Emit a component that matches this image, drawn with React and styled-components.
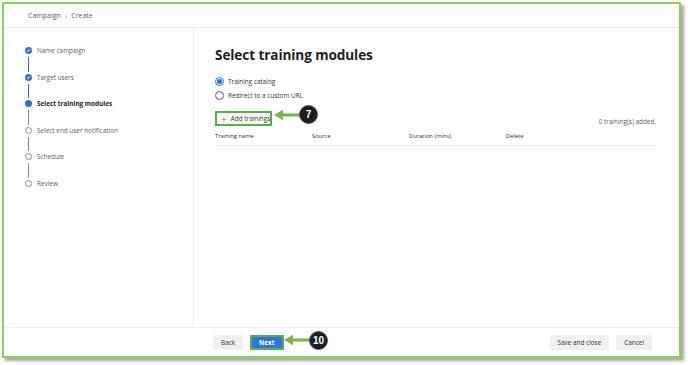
import React from 'react'
import styled, { createGlobalStyle } from 'styled-components'

const GlobalStyle = createGlobalStyle`
  html, body {
    margin: 0;
    padding: 0;
    background: #ffffff;
  }
  body {
    font-family: "Open Sans", "Noto Sans", sans-serif;
    color: #323130;
  }
`

const steps = [
  { label: 'Name campaign', state: 'done' },
  { label: 'Target users', state: 'done' },
  { label: 'Select training modules', state: 'current' },
  { label: 'Select end user notification', state: 'todo' },
  { label: 'Schedule', state: 'todo' },
  { label: 'Review', state: 'todo' },
]

const Check = () => (
  <svg width="5" height="5" viewBox="0 0 10 10">
    <path d="M2 5.2 L4.2 7.3 L8 2.8" fill="none" stroke="#fff" strokeWidth="1.8" strokeLinecap="round" strokeLinejoin="round" />
  </svg>
)

const Callout = ({ number, left, top }) => (
  <CalloutWrap style={{ left, top }}>
    <svg width="28" height="12" viewBox="0 0 28 12">
      <path d="M27 6 H9" stroke="#7ab648" strokeWidth="3.2" />
      <path d="M1 6 L10 0.8 L10 11.2 Z" fill="#7ab648" />
    </svg>
    <Badge>{number}</Badge>
  </CalloutWrap>
)

export default function App() {
  return (
    <Page>
      <GlobalStyle />
      <Frame>
        <Header>
          <Crumb>Campaign</Crumb>
          <Chevron>›</Chevron>
          <Crumb>Create</Crumb>
        </Header>
        <Body>
          <Nav>
            {steps.map((s, i) => (
              <Step key={s.label}>
                <Marker>
                  <Dot state={s.state}>{s.state === 'done' && <Check />}</Dot>
                  {i < steps.length - 1 && <Rail active={s.state === 'done'} />}
                </Marker>
                <StepLabel current={s.state === 'current'}>{s.label}</StepLabel>
              </Step>
            ))}
          </Nav>
          <Main>
            <Title>Select training modules</Title>
            <Radios>
              <RadioRow>
                <Radio checked />
                Training catalog
              </RadioRow>
              <RadioRow>
                <Radio />
                Redirect to a custom URL
              </RadioRow>
            </Radios>
            <ToolRow>
              <AddButton>
                <Plus>+</Plus>
                Add trainings
                <Callout number="7" left="56px" top="-8px" />
              </AddButton>
              <Count>0 training(s) added.</Count>
            </ToolRow>
            <TableHead>
              <Col>Training name</Col>
              <Col>Source</Col>
              <Col>Duration (mins)</Col>
              <Col>Delete</Col>
            </TableHead>
          </Main>
        </Body>
        <Footer>
          <Group>
            <Button>Back</Button>
            <Button primary>
              Next
              <Callout number="10" left="31px" top="-6px" />
            </Button>
          </Group>
          <Group>
            <Button>Save and close</Button>
            <Button>Cancel</Button>
          </Group>
        </Footer>
      </Frame>
    </Page>
  )
}

const Page = styled.div`
  width: 688px;
  height: 365px;
  padding: 2px 0 0 2px;
  box-sizing: border-box;
`

const Frame = styled.div`
  width: 679px;
  height: 356px;
  box-sizing: border-box;
  border: 2px solid #8ccf5a;
  background: #fff;
  box-shadow: 3px 3px 3px rgba(0, 0, 0, 0.35);
  display: flex;
  flex-direction: column;
`

const Header = styled.div`
  height: 23px;
  flex: none;
  display: flex;
  align-items: center;
  gap: 4px;
  padding-left: 24px;
  border-bottom: 1px solid #efefef;
  font-size: 7px;
  color: #605e5c;
`

const Crumb = styled.span``

const Chevron = styled.span`
  font-size: 8px;
  color: #8a8886;
  margin-top: -1px;
`

const Body = styled.div`
  flex: 1;
  display: flex;
  min-height: 0;
`

const Nav = styled.div`
  width: 190px;
  flex: none;
  border-right: 1px solid #efefef;
  padding: 19px 0 0 19px;
  box-sizing: border-box;
`

const Step = styled.div`
  display: flex;
  height: 26.6px;
`

const Marker = styled.div`
  width: 11px;
  display: flex;
  flex-direction: column;
  align-items: center;
`

const Dot = styled.div`
  width: 7px;
  height: 7px;
  border-radius: 50%;
  box-sizing: border-box;
  flex: none;
  display: flex;
  align-items: center;
  justify-content: center;
  background: ${p => (p.state === 'todo' ? '#fff' : '#2f6fd8')};
  border: ${p => (p.state === 'todo' ? '1px solid #8a8886' : 'none')};
`

const Rail = styled.div`
  width: 1px;
  flex: 1;
  margin: 3px 0 2px;
  background: ${p => (p.active ? '#2f6fd8' : '#8a8886')};
`

const StepLabel = styled.div`
  margin-left: 3px;
  font-size: 6.4px;
  line-height: 7px;
  color: ${p => (p.current ? '#201f1e' : '#605e5c')};
  font-weight: ${p => (p.current ? 700 : 400)};
`

const Main = styled.div`
  flex: 1;
  padding: 18px 23px 0 21px;
`

const Title = styled.div`
  font-size: 13.6px;
  font-weight: 700;
  letter-spacing: -0.1px;
  color: #201f1e;
  line-height: 18px;
`

const Radios = styled.div`
  margin-top: 12px;
  display: flex;
  flex-direction: column;
  gap: 4px;
`

const RadioRow = styled.div`
  display: flex;
  align-items: center;
  gap: 4px;
  font-size: 6.4px;
  color: #323130;
  height: 10px;
`

const Radio = styled.span`
  width: 9px;
  height: 9px;
  box-sizing: border-box;
  border-radius: 50%;
  border: 1px solid ${p => (p.checked ? '#2f6fd8' : '#605e5c')};
  display: flex;
  align-items: center;
  justify-content: center;
  &::after {
    content: '';
    width: 5px;
    height: 5px;
    border-radius: 50%;
    background: ${p => (p.checked ? '#2f6fd8' : 'transparent')};
  }
`

const ToolRow = styled.div`
  margin-top: 11px;
  display: flex;
  justify-content: space-between;
  align-items: flex-end;
`

const AddButton = styled.div`
  position: relative;
  width: 57px;
  height: 15px;
  box-sizing: border-box;
  border: 2px solid #58b04a;
  display: flex;
  align-items: center;
  gap: 4px;
  padding-left: 4px;
  font-size: 6.4px;
  white-space: nowrap;
  color: #323130;
`

const Plus = styled.span`
  font-size: 10px;
  font-weight: 300;
  color: #605e5c;
  line-height: 10px;
`

const Count = styled.div`
  font-size: 6.4px;
  color: #605e5c;
`

const TableHead = styled.div`
  margin-top: 6px;
  display: grid;
  grid-template-columns: 97px 97px 97px 1fr;
  padding-bottom: 5px;
  border-bottom: 1px solid #efefef;
  font-size: 5.8px;
  color: #323130;
`

const Col = styled.div``

const Footer = styled.div`
  height: 28px;
  flex: none;
  border-top: 1px solid #efefef;
  display: flex;
  align-items: center;
  justify-content: space-between;
  padding: 0 27px 0 209px;
`

const Group = styled.div`
  display: flex;
  gap: 7px;
`

const Button = styled.div`
  position: relative;
  height: 15px;
  box-sizing: border-box;
  padding: 0 ${p => (p.primary ? '7px' : '8px')};
  display: flex;
  align-items: center;
  white-space: nowrap;
  font-size: 6.4px;
  font-weight: ${p => (p.primary ? 700 : 400)};
  color: ${p => (p.primary ? '#fff' : '#323130')};
  background: ${p => (p.primary ? '#2b78d8' : '#f0f0f0')};
  border: ${p => (p.primary ? '2px solid #58b04a' : 'none')};
  border-radius: 1px;
`

const CalloutWrap = styled.div`
  position: absolute;
  display: flex;
  align-items: center;
  pointer-events: none;
`

const Badge = styled.div`
  width: 17px;
  height: 17px;
  margin-left: -2px;
  border-radius: 50%;
  background: #1c1c1c;
  border: 1px solid #555;
  color: #fff;
  font-family: "Liberation Sans", Arial, sans-serif;
  font-weight: 700;
  font-size: 10px;
  display: flex;
  align-items: center;
  justify-content: center;
`
